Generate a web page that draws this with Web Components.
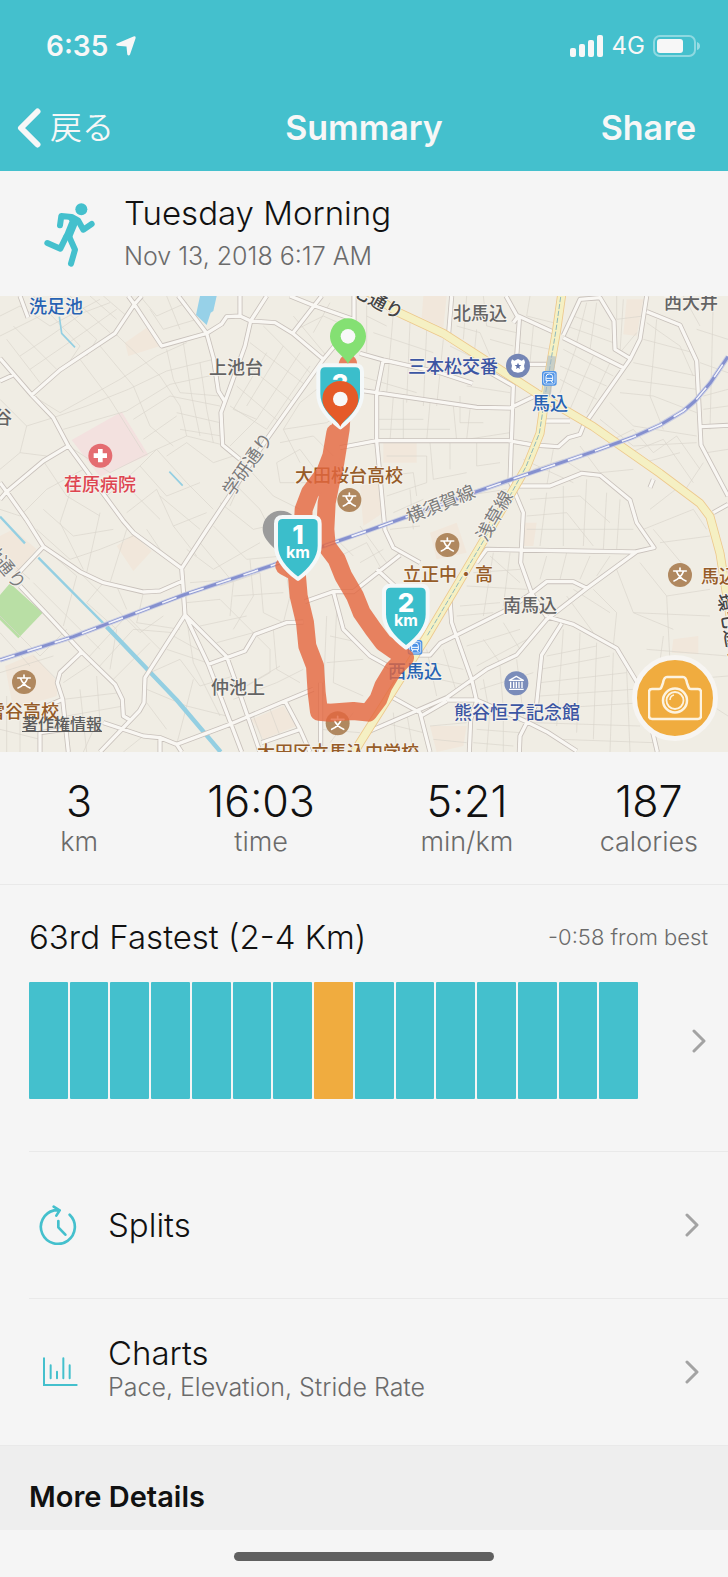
<!DOCTYPE html>
<html lang="en">
<head>
<meta charset="utf-8">
<meta name="viewport" content="width=device-width, initial-scale=1">
<title>Summary</title>
<style>
  body {
    margin: 0;
    background: #f5f5f5;
    color: #111;
    font-family: Inter, "Noto Sans CJK JP", sans-serif;
    font-weight: 300;
    --teal: #44c0cd;
    --amber: #f0ac3f;
    --grey: #6b6b6b;
    --line: #e9e9e9;
  }
</style>
</head>
<body>
<run-summary></run-summary>

<script>
function define(name, html, setup) {
  window.customElements.define(name, class extends HTMLElement {
    constructor() {
      super();
      const root = this.attachShadow({ mode: 'open' });
      root.innerHTML = html;
      if (setup) setup(root);
    }
  });
}

define('status-bar', `
  <style>
    :host { display: flex; align-items: center; justify-content: space-between; height: 79px; padding: 6px 28px 0 46px; color: #f7f7f7; }
    div { display: flex; align-items: center; gap: 8px; }
    time { font-size: 28px; font-weight: 600; }
    span { font-size: 24px; font-weight: 400; }
    svg { display: block; }
  </style>
  <div>
    <time>6:35</time>
    <svg width="20" height="20" viewBox="0 0 20 20"><path d="M17.500 .4 Q20.200 -.4 19.500 2.500 L14 18.500 Q12.800 20.600 11.300 18.500 L10.500 10.500 L1.500 9.800 Q-1 9 1 7.600 Z" fill="currentColor"/></svg>
  </div>
  <div>
    <svg width="34" height="22" viewBox="0 0 34 22" fill="currentColor">
      <rect x="0" y="13" width="6" height="9" rx="2"/><rect x="9" y="9" width="6" height="13" rx="2"/>
      <rect x="18" y="5" width="6" height="17" rx="2"/><rect x="27" y="0" width="6" height="22" rx="2"/>
    </svg>
    <span>4G</span>
    <svg width="47" height="22" viewBox="0 0 47 22">
      <rect x="1" y="1" width="41" height="20" rx="6" fill="none" stroke="#fff" stroke-opacity=".4" stroke-width="2"/>
      <rect x="4" y="4" width="26" height="14" rx="3" fill="currentColor"/>
      <path d="M44 7 Q47 8 47 11 T44 15Z" fill="#fff" opacity=".45"/>
    </svg>
  </div>
`);

define('nav-bar', `
  <style>
    :host { display: grid; grid-template-columns: 1fr auto 1fr; align-items: center; height: 86px; padding: 0 32px 0 17px; color: #f7f7f7; }
    h1, button { margin: 0; padding: 0; border: 0; background: none; color: inherit; font: inherit; font-size: 34px; font-weight: 600; line-height: 40px; }
    .back { display: flex; align-items: center; gap: 9px; justify-self: start; font-size: 32px; font-weight: 350; }
    .share { justify-self: end; }
    h1 { margin-left: 15px; }
  </style>
  <button class="back" type="button">
    <svg width="24" height="40" viewBox="0 0 24 40"><path d="M20.500 3.500 L4 20 L20.500 36.500" fill="none" stroke="currentColor" stroke-width="6" stroke-linecap="round" stroke-linejoin="round"/></svg>
    <slot name="back"></slot>
  </button>
  <h1><slot></slot></h1>
  <button class="share" type="button"><slot name="action"></slot></button>
`);

define('activity-title', `
  <style>
    :host { display: flex; align-items: center; gap: 28px; height: 125px; padding: 0 29px 0 43px; }
    h2 { margin: 0; font-size: 33px; font-weight: 300; line-height: 44px; }
    p { margin: 0; font-size: 25px; line-height: 42px; color: var(--grey); }
    svg { flex: none; }
  </style>
  <svg width="53" height="66" viewBox="0 0 159 198" fill="none" stroke="var(--teal)" stroke-width="18" stroke-linecap="round" stroke-linejoin="round">
    <circle cx="115" cy="25" r="18" fill="var(--teal)" stroke="none"/>
    <path d="M51 73 L55 45 L86 48 L105 58 L121 86 L146 69"/>
    <path d="M99 53 L74 44 L84 60 L66 105 L82 112 L102 64Z" fill="var(--teal)" stroke-width="8"/>
    <path d="M70 106 L52 143 L13 126"/>
    <path d="M78 106 L96 146 L84 188"/>
  </svg>
  <div><h2><slot></slot></h2><p><slot name="date"></slot></p></div>
`);

// Base map paths, in thirds of a pixel
const STREETS = [
  'M425 0 L403 25 L345 112 L180 222 L95 297',
  'M385 0 L403 25 L485 150 L620 112',
  'M535 0 L620 112 L640 185 L655 285 L675 317 L663 350 L668 447 L720 490',
  'M620 112 L665 84 L680 62 L720 60 L752 75 L825 80 L878 112 L970 190',
  'M720 0 V60 M800 0 L752 75 L735 150 L675 317 M965 0 L878 112',
  'M870 0 L940 28 L1060 70 M1062 0 V80 L970 190 L800 430 L620 702 L545 817',
  'M0 187 L95 297 L160 365 L205 450 L370 675 L400 710 L545 817',
  'M0 255 L38 238 M60 0 L84 65 M0 610 L20 587 L130 495 L205 450 M0 560 L20 587 L80 672 L130 752',
  'M130 752 L240 827 L310 860 L430 888 L480 885 L548 855 M130 752 L50 837',
  'M545 817 L548 855 L555 957 L435 1145 L432 1220 L418 1245 L300 1368',
  'M555 957 L680 1082 L715 1180 L780 1368 M555 957 L625 1105 L725 1368',
  'M625 1105 L735 1065 L765 1015 L860 980 L910 978',
  'M60 870 L150 965 L245 1068 L345 1165 L367 1210 L370 1260 L390 1272',
  'M245 1068 L180 1130 L172 1160 L188 1210 L205 1368',
  'M310 1280 L430 1320 L480 1325 L530 1345 L690 1285 L855 1215 L940 1180',
  'M480 1325 V1368 M530 1345 L545 1368 M855 1215 L900 1300 L930 1368 M785 1340 L900 1300',
  'M962 1160 V1368 M120 1368 V1310 L195 1300 M188 1210 L130 1235',
  'M915 917 L1000 887 L1060 887 L1200 777 M1000 887 L1030 1000 L1110 1080 L1200 1130',
  'M1080 172 L1150 192 L1320 230 L1418 262 M1355 0 L1345 125',
  'M1518 0 L1558 72 L1548 210 M1548 205 H1640 M1470 230 L1540 270 L1530 555 L1570 650 L1562 800 L1595 892 L1640 962',
  'M1540 80 L1555 60 L1660 108 M1690 125 L1870 215',
  'M1690 118 L1740 10 L1800 5 L1842 75 L1845 160 L1895 190',
  'M1940 0 L1920 130 L1890 190 L1750 390 L1740 415 L1705 425 L1675 452 L1600 447 L1525 434 H1130 L1020 455',
  'M1940 47 L2040 87 L2090 195 L2103 447 L2184 600 M2103 392 L2184 388',
  'M1150 190 L1130 290 V434 L1155 702 L1180 755 L1260 800 M1130 820 L1250 930',
  'M1080 283 L1130 290 L1430 334 L1530 336 L1600 302 M1630 375 H1710 M1960 550 L1950 575',
  'M1555 570 H1650 L1745 532 L1800 538 L1890 612 L1910 680 L1962 755 L1905 768 L1460 760 L1430 800',
  'M1910 767 L1760 877 L1640 970 L1550 1077 L1460 1120 L1340 1205 L1110 1305',
  'M1760 877 L1720 857 H1640 L1595 892 L1520 942 L1370 1017 L1320 1042 L1290 1077 H1240',
  'M1350 912 L1355 980 L1415 1150 L1430 1215 L1412 1270 L1408 1368 M1340 1212 H1430',
  'M1170 1200 L1260 1250 L1290 1368 M1260 1262 L1340 1215 M2140 650 L2184 625',
  'M1640 962 L1720 985 L1850 1057 L1930 1190 L1972 1368',
  'M1685 982 L1625 1077 L1610 1222 L1560 1320 L1558 1368 M1430 1212 L1580 1277 L1640 1307 L1730 1365'
].join(' ');

const LANES = [
  'M0 60 L60 30 L150 90 L300 10 M0 120 L120 60 M100 0 L240 150 L200 210 M150 0 L290 130 L260 180 M210 0 L330 110 M270 0 L350 70 M310 0 L380 60',
  'M40 90 L170 220 M20 130 L120 260 M60 180 L150 120 L250 50 L330 20 M90 220 L250 110 L350 40',
  'M100 300 L180 350 L360 250 L470 180 L560 140 M160 365 L260 330 L385 280 L500 225 L640 190 M190 400 L380 345 L510 265 L650 235',
  'M420 0 L470 60 L560 20 M450 40 L490 100 L590 70 M500 0 L540 100 M345 112 L480 240 L540 330 L560 420 M300 150 L400 270 L450 390 L520 450',
  'M240 190 L330 310 L430 470 M500 160 L520 250 L540 290 L660 300 M550 140 L575 300 L600 420 M600 200 L620 340 L640 440 M510 300 L660 330 M530 350 L660 380 M540 400 L665 420',
  'M400 370 L510 300 M430 430 L530 360 M690 330 L800 400 M710 270 L840 380 M730 200 L880 320 M750 140 L920 270 M790 90 L930 230',
  'M800 170 L700 340 M850 150 L740 330 M900 170 L770 370 M930 210 L800 400 M700 340 L770 370 L690 450',
  'M0 310 L80 390 L60 470 L0 520 M80 390 L160 365 M60 470 L140 480 M0 640 L60 660 L140 580 L250 520 M130 495 L200 600 L300 660',
  'M205 450 L330 530 L470 460 L560 420 L670 447 M250 510 L320 600 L420 510 L500 600 L600 560 M300 580 L370 560 L480 670 M420 510 L470 460 L560 560 L640 640',
  'M380 650 L470 580 L520 690 L620 650 M500 480 L560 440 L640 500 L700 480 M440 700 L500 790 M520 690 L590 780 M480 600 L600 700',
  'M130 640 L220 720 L340 700 M110 700 L210 790 L300 760 L400 720 M220 560 L180 680 L250 820 M300 650 L260 830 M380 700 L330 860',
  'M10 780 L90 850 M100 860 L300 1060 M150 770 L230 840 L190 990 M240 830 L420 1010 L490 960 M310 860 L260 920 L350 1000 L330 1120 M430 890 L410 980 L540 1000',
  'M350 870 L380 940 M560 760 L640 820 L780 740 M600 740 L700 860 L690 960 M640 690 L740 790 L850 780 M660 870 L780 830 L790 950 L850 980 M700 900 L850 890 M750 790 L760 900 L700 1000',
  'M570 860 L700 850 M560 920 L660 910 L760 1010 M600 990 L740 960 M650 1040 L760 1010 L810 1060 L810 1130 L740 1170 M820 1000 L830 1120 L900 1160 M850 780 L870 900 L850 980',
  'M0 960 L120 1080 L200 1000 M0 1010 L90 1110 M0 1130 L160 1080 M100 1080 L170 1150 M260 1090 L380 960 L480 1060 M290 1120 L400 1000 L520 1010 M330 1160 L450 1040',
  'M190 1210 L360 1190 M190 1160 L280 1100 M200 1260 L370 1230 M240 1180 L260 1368 M290 1140 L300 1280 M440 1180 L560 1230 L530 1345 M440 1220 L500 1300 M450 1130 L540 1090 L600 1170 L700 1140',
  'M500 1060 L620 1100 M520 1020 L610 1070 M560 970 L580 1100 L660 1260 M580 1150 L560 1230 L680 1260 M0 1300 L120 1330 M20 1200 V1368 M60 1230 V1368 M250 1368 L290 1280 M370 1368 L430 1320',
  'M700 1210 L830 1160 L910 1120 M720 1180 L840 1110 M760 1260 L790 1340 M810 1240 L840 1320 M980 960 L970 1200 M1010 940 L1000 1160 L1090 1200 M980 1100 L1090 1090 M990 1020 L1080 1040',
  'M960 1300 L1080 1310 M990 1340 L1060 1250 M870 110 L970 60 L1060 100 M880 60 L980 180 M990 20 L940 110 M1000 240 L900 320 L850 400 L900 500 M850 400 L980 380 L1060 330',
  'M840 440 L940 420 L1000 480 M830 500 L840 560 L920 560 M830 500 L900 460 L960 540 M720 490 L820 600 L900 640 M700 560 L780 640 L820 720 M660 620 L760 700 L850 680 M740 520 L690 630',
  'M1080 240 L1250 290 M1100 0 V170 M1180 50 L1160 290 M1230 80 L1220 320 M1280 100 L1270 330 M1330 130 L1310 330 M1120 110 L1300 170 M1100 60 L1160 90 M1400 0 L1390 130 M1450 0 L1460 90 L1550 110',
  'M1370 90 L1440 110 L1470 180 M1350 150 L1430 190 M1430 100 L1420 200 M1470 130 L1540 150 M1180 300 L1170 434 M1210 310 V434 M1290 320 L1280 434 M1360 330 L1370 434 M1410 340 L1400 430 L1530 410',
  'M1130 370 H1270 M1140 400 H1350 M1400 270 L1530 290 M1380 300 V380 H1450 M1160 480 H1280 V560 M1150 540 L1240 530 L1250 600 M1290 440 L1300 550 L1400 530 M1350 440 V520 M1430 440 V510 L1500 500',
  'M1160 600 L1280 560 M1180 650 L1270 610 M1170 700 L1260 690 M1230 580 L1240 700 M1390 600 L1520 580 M1590 0 L1580 60 L1660 80 M1600 90 L1590 200 M1560 140 L1650 160 M1720 60 L1830 100 M1700 90 L1840 140',
  'M1760 20 L1730 140 M1790 20 L1770 160 M1850 0 V70 L1930 60 M1870 10 L1860 170 L1910 110 M1690 160 L1840 240 M1680 210 L1820 270 M1730 150 L1680 290 M1780 180 L1710 340 M1830 200 L1760 350',
  'M1680 250 L1790 310 M1940 80 L2040 150 L2080 240 M1930 130 L2080 170 M1900 200 L2090 240 M1880 250 L2090 280 M1860 290 L1960 300 L2090 350 M1830 320 L1900 390 L2090 420 M1970 70 L1950 300 L1990 400',
  'M1800 370 L1900 450 L2090 440 M2090 100 L2184 130 M2100 200 L2184 230 M2110 300 L2184 280 M2140 0 L2130 400 M2050 0 L2100 90 M2184 330 L2110 340 M2120 470 L2184 460 M2110 500 L2050 590',
  'M1840 430 L1900 400 L1960 470 L2030 420 L2100 520 M1890 470 L1990 430 L2080 560 M1930 500 L2040 470 M1570 490 L1720 560 M1600 520 L1690 490 L1750 530 M1660 460 L1640 570 M1740 450 L1800 530 L1900 520',
  'M1590 610 L1740 600 L1830 680 M1580 660 L1700 650 L1780 750 M1640 590 L1620 750 M1690 570 V750 M1760 550 L1750 750 M1820 590 L1810 760 M1860 610 L1850 760 M1580 700 H1900 M1930 700 L2080 640 L2120 700',
  'M1950 640 L2040 570 M1960 700 L2060 820 M1980 740 L2130 720 M1920 800 L2000 900 L2130 880 M1850 820 L1900 950 L2020 1000 M1780 880 L1850 950 L1840 1050 M1900 950 L2130 960 M2000 900 L2010 1100',
  'M1470 780 L1560 860 M1420 830 L1560 820 M1400 870 L1580 880 M1480 770 L1450 960 M1530 770 L1510 930 M1640 780 L1620 850 M1700 770 L1680 850 M1770 780 L1740 850 M1830 780 L1790 840 M1380 930 L1500 920',
  'M1370 960 L1480 950 M1700 900 L1780 1010 M1720 880 L1830 950 M1400 1050 L1560 1000 M1430 1110 L1600 1020 M1450 1030 L1500 1100 M1510 980 L1560 1060 M1640 1080 L1790 1050 M1620 1120 L1830 1080',
  'M1620 1160 L1880 1130 M1620 1200 L1900 1180 M1610 1240 L1930 1220 M1690 1000 L1670 1290 M1740 1010 L1730 1310 M1790 1040 L1780 1330 M1840 1070 L1830 1368 M1880 1120 L1890 1368 M1600 1280 L1920 1290',
  'M1680 1330 L1960 1340 M1940 1060 L2184 1080 M1960 1120 L2060 1150 L2184 1140 M1990 1020 L1970 1170 M1440 1180 L1600 1130 M1450 1150 L1470 1260 M1500 1110 L1510 1240 M1550 1090 L1570 1260',
  'M1430 1300 L1560 1310 M1420 1340 L1540 1350 M1470 1240 L1460 1368 M1510 1260 V1368 M1290 1290 L1400 1280 M1300 1330 L1400 1340 M1300 1100 L1390 1120 M1270 1140 L1410 1170 M1280 1060 L1310 1200',
  'M1330 1060 L1370 1190 M1150 1280 L1270 1310 M1180 1250 L1190 1368 M1220 1250 L1240 1368 M1080 800 L1150 760 M1020 780 L1100 740 L1150 830 M1000 720 L1060 780 M1080 690 L1160 800 M2060 1180 L2184 1260'
].join(' ');

const HIGHWAYS = 'M1080 -30 L1190 47 L1330 112 L1610 292 L1780 392 L1980 532 L2100 622 L2130 662 L2160 772 L2190 960'
  + ' M1687 -18 L1670 102 L1640 272 L1620 412 L1580 512 L1535 590 L1440 752 L1280 1022 L1200 1150 L1080 1340 L1050 1390';
const RAIL = 'M0 1092 L220 1022 L550 897 L820 807 L980 747 L1110 702 L1430 587 L1530 552 L1780 467 L1900 423 L1980 387 L2050 345 L2085 315 L2130 262 L2184 182';

// text, x, baseline, colour class, rotation
const LABELS = [
  ['洗足池', 56, 17, 'blue'], ['上池台', 236, 78], ['谷', 3, 128],
  ['荏原病院', 100, 195, 'red'], ['学研通り', 253, 172, 'road', -55],
  ['環七通り', 367, 7, 'dark', 28], ['大田桜台高校', 349, 186, 'brown'],
  ['三本松交番', 453, 77, 'navy'], ['北馬込', 480, 24], ['西大井', 691, 13],
  ['馬込', 550, 114, 'blue'], ['横須賀線', 443, 214, 'road', -22],
  ['浅草線', 500, 223, 'road', -60], ['立正中・高', 448, 285, 'brown'],
  ['南馬込', 530, 316], ['馬込', 719, 287, 'brown'], ['環七通り', 724, 334, 'dark', 80],
  ['西馬込', 415, 382, 'blue'], ['仲池上', 238, 398], ['雪谷高校', 23, 422, 'brown'],
  ['池通り', 0, 274, 'road', 50], ['大田区立馬込中学校', 338, 463, 'brown'],
  ['熊谷恒子記念館', 517, 423, 'navy']
];

const SHIELD = 'M26 6 H117 Q137 6 137 26 V92 Q137 143 72 192 Q6 143 6 92 V26 Q6 6 26 6Z';
const PIN = 'M0 83 C-12 58 -54 38 -54 0 A54 54 0 1 1 54 0 C54 38 12 58 0 83Z';
const school = (x, y) => `<g transform="translate(${x} ${y})"><circle r="36" fill="#b0885f"/><path d="M-19 -12 H19 M0 -21 V-12 M-11 -12 Q-3 9 18 18 M11 -12 Q3 9 -18 18" fill="none" stroke="#fff" stroke-width="5" stroke-linecap="round"/></g>`;
const station = (x, y) => `<g transform="translate(${x} ${y})"><rect x="-22" y="-22" width="44" height="44" rx="8" fill="#4d92e6"/><rect x="-17" y="-17" width="34" height="34" rx="5" fill="none" stroke="#fff" stroke-width="2"/><path d="M-10 7 V-5 Q-10 -13 0 -13 T10 -5 V7Z M-9 0 H9 M-6 8 L-10 14 M6 8 L10 14" fill="none" stroke="#fff" stroke-width="3"/></g>`;

define('route-map', `
  <style>
    :host { display: block; position: relative; overflow: hidden; background: #f0ede4; }
    svg.map { display: block; width: 100%; height: auto; }
    text { font: 500 18px "Noto Sans CJK JP", sans-serif; text-anchor: middle; fill: #646464; stroke: #f5f2ec; stroke-width: 2px; paint-order: stroke; stroke-linejoin: round; }
    .blue { fill: #2763b3; } .navy { fill: #3c56a3; } .brown { fill: #965c28; }
    .red { fill: #de4550; } .road { fill: #7c7c7c; font-weight: 400; } .dark { fill: #444; }
    text.num { font: 800 26px Inter, sans-serif; fill: #fff; stroke: none; }
    text.unit { font: 700 16px Inter, sans-serif; fill: #fff; stroke: none; }
    a { position: absolute; left: 22px; bottom: 17px; font: 500 16px/24px "Noto Sans CJK JP", sans-serif; color: #5c5c5c; text-decoration: underline; }
    button { position: absolute; right: 10px; bottom: 11px; width: 86px; height: 86px; padding: 0; border: 5px solid #f7f5f2; border-radius: 50%; background: var(--amber); display: grid; place-items: center; }
  </style>
  <svg class="map" viewBox="0 0 728 456">
    <svg width="728" height="456" viewBox="0 0 2184 1368" fill="none" stroke-linejoin="round">
      <path fill="#f1e7db" d="M375 140 L440 95 L480 150 L385 180Z M1270 0 H1340 L1330 95 L1265 65Z M1880 10 H1930 L1910 120 L1870 115Z M1150 440 H1250 V500 H1150Z M350 750 L400 715 L455 765 L400 825Z M0 720 L40 700 L110 760 L50 830 L0 780Z M15 1110 L100 1075 L175 1160 L170 1200 L40 1240Z M755 1270 L850 1230 L890 1290 L790 1330Z M1290 710 L1370 680 L1400 770 L1310 790Z M2020 1030 L2095 1020 V1075 L2015 1070Z M1290 1290 H1400 L1390 1350 L1310 1368Z M1560 680 H1610 L1600 750 H1570Z M1080 570 L1140 555 L1150 650 L1090 690Z"/>
      <path d="M215 432 L365 347 L445 477 L300 542Z" fill="#f3e1df"/>
      <path d="M0 897 L30 862 L128 950 L55 1027 L0 972Z" fill="#b9dfa5"/>
      <path d="M600 0 H650 L640 45 L632 50 L620 87 L588 57Z" fill="#97d1e8"/>
      <path d="${LANES}" stroke="#d9d5cc" stroke-width="2"/>
      <g stroke="#94cfe2">
        <path d="M178 62 L185 112 L225 154 M508 527 L548 569" stroke-width="5"/>
        <path d="M0 662 L75 742 M115 785 L320 992" stroke-width="7"/>
        <path d="M320 992 L530 1212 L662 1368" stroke-width="13"/>
      </g>
      <path d="${STREETS}" stroke="#c8c1bb" stroke-width="15"/>
      <path d="${STREETS}" stroke="#f9f7f3" stroke-width="10"/>
      <path d="${HIGHWAYS}" stroke="#edc88c" stroke-width="27"/>
      <path d="${HIGHWAYS}" stroke="#f5f0c3" stroke-width="22"/>
      <path d="M1685 -18 L1668 102 L1640 272 L1618 412 L1578 512 L1535 590 L1440 752 L1280 1022" stroke="#8fb9bd" stroke-width="3" stroke-dasharray="16 5"/>
      <path d="M1656 180 L1640 300" stroke="#a9b9c9" stroke-opacity=".6" stroke-width="24"/>
      <path d="${RAIL}" stroke="#c9cde2" stroke-width="15"/>
      <path d="${RAIL}" stroke="#8590cf" stroke-width="9"/>
      <path d="${RAIL}" stroke="#f1f2fa" stroke-width="5" stroke-dasharray="46 40"/>
      <g transform="translate(301 479)"><circle r="36" fill="#e46c71"/><path d="M0 -20 V20 M-20 0 H20" stroke="#fff" stroke-width="14"/></g>
      ${school(1048, 612)}${school(72, 1158)}${school(1013, 1282)}${school(1342, 747)}${school(2040, 837)}
      ${station(1648, 247)}${station(1245, 1054)}
      <g transform="translate(1554 209)"><circle r="36" fill="#7586b5"/><path d="M-18 -19 L-11 -15 L0 -20 L11 -15 L18 -19 L21 -10 L18 0 L20 10 L13 18 L0 21 L-13 18 L-20 10 L-18 0 L-21 -10Z" fill="#fff"/><path d="M0 -9 L3 -2 L10 -2 L4 3 L6 10 L0 6 L-6 10 L-4 3 L-10 -2 L-3 -2Z" fill="#5d70a8"/></g>
      <g transform="translate(1549 1162)"><circle r="36" fill="#7a8cba"/><path d="M-21 -9 L0 -21 L21 -9Z M-17 -5 V14 M-8 -5 V14 M0 -5 V14 M8 -5 V14 M17 -5 V14 M-22 18 H22" stroke="#fff" stroke-width="4"/></g>
    </svg>
    <g class="labels"></g>
    <svg width="728" height="456" viewBox="0 0 2184 1368" fill="none" stroke-linejoin="round" stroke-linecap="round">
      <g stroke="#e5673f" stroke-width="54" opacity=".8">
        <path d="M1044 202 L1030 260 L1022 400 L1014 450 L1006 500 L992 560 L980 620 L976 700 L980 750 L1010 790 L1030 840 L1065 900 L1085 950 L1120 1000 L1150 1040 L1215 1085 L1180 1120 L1150 1170 L1135 1210 L1105 1250 L1060 1245 L990 1250 L957 1247 L950 1190 L945 1110 L922 1050 L915 980 L896 900 L890 830 L853 810"/>
        <path d="M1006 410 L994 480 L975 530 L930 590 L911 640 L908 700 L870 790"/>
      </g>
      <g transform="translate(842 698)"><path d="${PIN}" fill="#9b9b9b"/></g>
      <g fill="#3bbecb" stroke="#f4f8f9" stroke-width="12">
        <path transform="translate(822 657)" d="${SHIELD}"/>
        <path transform="translate(1146 863)" d="${SHIELD}"/>
        <path transform="translate(949 202)" d="${SHIELD}"/>
      </g>
    </svg>
    <text class="num" x="298" y="248">1</text><text class="unit" x="298" y="262">km</text>
    <text class="num" x="406" y="316">2</text><text class="unit" x="406" y="330">km</text>
    <text class="num" x="340" y="97">3</text>
    <svg width="728" height="456" viewBox="0 0 2184 1368">
      <g transform="translate(1044 121)"><path d="${PIN}" fill="#84e073"/><circle r="22" fill="#f8f8f8"/></g>
      <g transform="translate(1021 309)"><path d="${PIN}" fill="#e55a28"/><circle r="22" fill="#f8f8f8"/></g>
    </svg>
  </svg>
  <a href="#legal">著作権情報</a>
  <button type="button" aria-label="Add photo">
    <svg width="54" height="46" viewBox="0 0 54 46" fill="none" stroke="#fdf3e0" stroke-width="2.500" stroke-linejoin="round">
      <path d="M4 14 H11 Q13 14 13.500 12 L15 8 Q16 2 19 2 H35 Q38 2 39 8 L40.500 12 Q41 14 43 14 H50 Q53 14 53 17 V41 Q53 44 50 44 H4 Q1 44 1 41 V17 Q1 14 4 14Z"/>
      <circle cx="27" cy="25.500" r="12"/><circle cx="27" cy="25.500" r="8.500" stroke-width="1.800"/><path d="M22 25 Q22 21 26 20" stroke-width="1.500"/>
    </svg>
  </button>
`, root => {
  const layer = root.querySelector('.labels');
  for (const [text, x, y, cls, turn] of LABELS) {
    const t = document.createElementNS('http://www.w3.org/2000/svg', 'text');
    t.textContent = text;
    t.setAttribute('x', x);
    t.setAttribute('y', y);
    if (cls) t.setAttribute('class', cls);
    if (turn) t.setAttribute('transform', `rotate(${turn} ${x} ${y})`);
    layer.append(t);
  }
});

define('stat-item', `
  <style>
    :host { display: flex; flex-direction: column; align-items: center; }
    b { font-size: 43px; font-weight: 300; line-height: 47px; }
    span { font-size: 27px; line-height: 33px; color: var(--grey); }
  </style>
  <b><slot></slot></b><span><slot name="unit"></slot></span>
`);

define('stats-row', `
  <style>
    :host { display: grid; grid-template-columns: 10fr 13fr 13fr 10fr; padding: 26px 0; border-bottom: 1px solid var(--line); }
  </style>
  <slot></slot>
`);

define('chevron-icon', `
  <style>:host { display: block; flex: none; } svg { display: block; }</style>
  <svg width="14" height="24" viewBox="0 0 14 24"><path d="M2 2 L12 12 L2 22" fill="none" stroke="#a3a3a3" stroke-width="3" stroke-linecap="round" stroke-linejoin="round"/></svg>
`);

define('rank-card', `
  <style>
    :host { display: block; padding: 32px 20px 52px 29px; }
    header { display: flex; align-items: center; justify-content: space-between; }
    h2 { margin: 0; font-size: 33px; font-weight: 300; line-height: 40px; }
    span { font-size: 22px; line-height: 40px; color: var(--grey); }
    a { display: flex; align-items: center; gap: 54px; margin-top: 25px; padding-right: 2px; }
    .bars { flex: 1; display: flex; gap: 2px; height: 117px; }
    i { flex: 1; background: var(--teal); border-radius: 1px; }
    i.now { background: var(--amber); }
  </style>
  <header><h2><slot></slot></h2><span><slot name="delta"></slot></span></header>
  <a href="#ranking" aria-label="Ranking"><div class="bars"></div><chevron-icon></chevron-icon></a>
`, root => {
  const bars = root.querySelector('.bars');
  for (let n = 1; n <= 15; n++) {
    const bar = document.createElement('i');
    if (n === 8) bar.className = 'now';
    bars.append(bar);
  }
});

define('menu-row', `
  <style>
    :host { display: block; padding-left: 29px; }
    a { display: flex; align-items: center; gap: 29px; height: 146px; padding: 0 29px 0 10px; border-top: 1px solid var(--line); color: inherit; text-decoration: none; }
    .icon { flex: none; width: 40px; }
    .text { flex: 1; display: flex; flex-direction: column; }
    .title { font-size: 33px; line-height: 36px; }
    .sub { font-size: 25px; line-height: 32px; color: var(--grey); }
    ::slotted([slot=sub]) { display: block; padding-bottom: 6px; }
  </style>
  <a href="#details">
    <div class="icon"><slot name="icon"></slot></div>
    <div class="text"><span class="title"><slot></slot></span><span class="sub"><slot name="sub"></slot></span></div>
    <chevron-icon></chevron-icon>
  </a>
`);

define('section-title', `
  <style>
    :host { display: block; padding: 33px 29px 15px; background: #eee; border-top: 1px solid var(--line); }
    h2 { margin: 0; font-size: 29px; font-weight: 600; line-height: 36px; }
  </style>
  <h2><slot></slot></h2>
`);

define('home-indicator', `
  <style>
    :host { display: flex; justify-content: center; padding: 22px 0 16px; }
    div { width: 260px; height: 9px; border-radius: 5px; background: #606060; }
  </style>
  <div></div>
`);

define('run-summary', `
  <style>
    :host { display: block; }
    .top { background: var(--teal); }
    svg { display: block; }
  </style>
  <div class="top">
    <status-bar></status-bar>
    <nav-bar><span slot="back">戻る</span>Summary<span slot="action">Share</span></nav-bar>
  </div>
  <activity-title>Tuesday Morning<span slot="date">Nov 13, 2018 6:17 AM</span></activity-title>
  <route-map></route-map>
  <stats-row>
    <stat-item>3<span slot="unit">km</span></stat-item>
    <stat-item>16:03<span slot="unit">time</span></stat-item>
    <stat-item>5:21<span slot="unit">min/km</span></stat-item>
    <stat-item>187<span slot="unit">calories</span></stat-item>
  </stats-row>
  <rank-card>63rd Fastest (2-4 Km)<span slot="delta">-0:58 from best</span></rank-card>
  <menu-row>
    <svg slot="icon" width="40" height="40" viewBox="0 0 120 120" fill="none" stroke="#44c0cd" stroke-width="8" stroke-linecap="round" stroke-linejoin="round">
      <path d="M92 29 A51 51 0 1 1 45 16 L62 16 M44 5 L62 16 L52 32 M58 48 V67 L79 89"/>
    </svg>Splits
  </menu-row>
  <menu-row>
    <svg slot="icon" width="40" height="30" viewBox="0 0 120 90" fill="none" stroke="#44c0cd" stroke-width="6" stroke-linecap="round">
      <path d="M15 4 V84 H113 M35 25 V64 M54 44 V64 M73 4 V64 M92 25 V64"/>
    </svg>Charts<span slot="sub">Pace, Elevation, Stride Rate</span>
  </menu-row>
  <section-title>More Details</section-title>
  <home-indicator></home-indicator>
`);
</script>
</body>
</html>
